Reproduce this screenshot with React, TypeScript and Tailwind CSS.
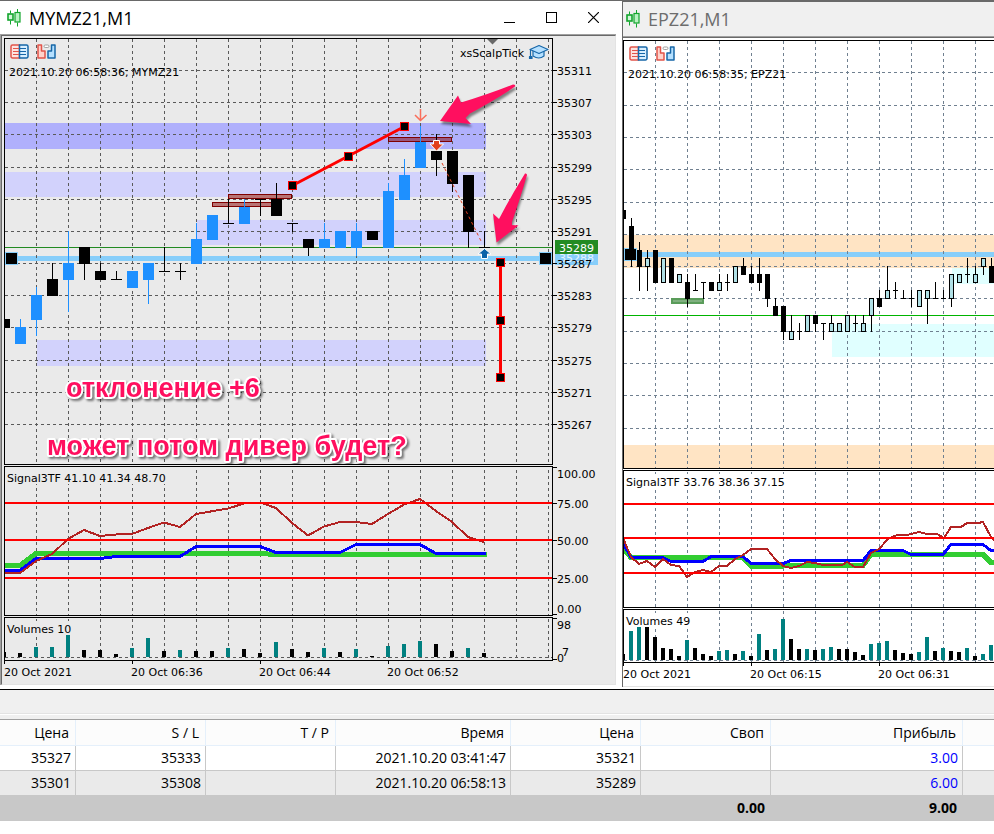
// src/App.tsx
import React from 'react';

type CandleKind = 'up' | 'down' | 'flat';
// x, high, low, body top, body bottom, kind
type CandleRow = [number, number, number, number, number, CandleKind];
// x, height, rising
type VolumeRow = [number, number, boolean];

const MYM_CANDLES: CandleRow[] = [
    [4, 319, 328, 319, 328, 'down'],
    [20, 319, 344, 327, 344, 'up'],
    [36, 287, 336, 295, 320, 'up'],
    [52, 263, 296, 279, 296, 'down'],
    [68, 231, 312, 263, 280, 'up'],
    [84, 247, 280, 247, 264, 'down'],
    [100, 263, 280, 271, 280, 'down'],
    [116, 271, 280, 279, 280, 'flat'],
    [132, 271, 288, 271, 288, 'up'],
    [148, 263, 304, 263, 280, 'up'],
    [164, 247, 272, 271, 272, 'flat'],
    [180, 263, 280, 271, 272, 'flat'],
    [196, 223, 264, 239, 264, 'up'],
    [212, 215, 240, 215, 240, 'up'],
    [228, 199, 224, 223, 224, 'flat'],
    [244, 199, 224, 207, 224, 'up'],
    [260, 199, 216, 199, 200, 'flat'],
    [276, 183, 216, 199, 216, 'down'],
    [292, 223, 232, 223, 224, 'flat'],
    [308, 239, 256, 239, 248, 'down'],
    [324, 223, 248, 239, 248, 'up'],
    [340, 231, 248, 231, 248, 'up'],
    [356, 223, 256, 231, 248, 'up'],
    [372, 231, 240, 231, 240, 'down'],
    [388, 183, 248, 191, 248, 'up'],
    [404, 159, 200, 175, 200, 'up'],
    [420, 126, 168, 142, 168, 'up'],
    [436, 134, 176, 151, 160, 'down'],
    [452, 151, 192, 151, 184, 'down'],
    [468, 175, 248, 175, 232, 'down'],
    [484, 231, 248, 247, 248, 'flat'],
];

const EP_CANDLES: CandleRow[] = [
    [623, 210, 219, 210, 219, 'down'],
    [631, 218, 267, 226, 260, 'down'],
    [639, 242, 291, 250, 267, 'down'],
    [647, 250, 291, 258, 267, 'up'],
    [655, 250, 283, 250, 283, 'down'],
    [663, 258, 283, 258, 283, 'up'],
    [671, 258, 283, 258, 283, 'down'],
    [679, 274, 283, 274, 283, 'up'],
    [687, 274, 307, 282, 299, 'down'],
    [695, 274, 291, 290, 291, 'flat'],
    [703, 282, 299, 282, 283, 'flat'],
    [711, 282, 291, 282, 291, 'down'],
    [719, 274, 291, 282, 291, 'up'],
    [727, 274, 291, 282, 283, 'flat'],
    [735, 266, 283, 266, 283, 'up'],
    [743, 258, 275, 266, 275, 'down'],
    [751, 266, 283, 274, 283, 'down'],
    [759, 258, 291, 274, 283, 'down'],
    [767, 274, 307, 274, 299, 'down'],
    [775, 298, 316, 306, 316, 'down'],
    [783, 306, 340, 306, 332, 'down'],
    [791, 315, 340, 331, 340, 'up'],
    [799, 323, 340, 331, 332, 'flat'],
    [807, 315, 332, 315, 332, 'up'],
    [815, 315, 332, 315, 324, 'down'],
    [823, 323, 340, 323, 324, 'flat'],
    [831, 315, 332, 323, 332, 'up'],
    [839, 323, 332, 323, 332, 'up'],
    [847, 315, 332, 315, 332, 'up'],
    [855, 315, 332, 323, 324, 'flat'],
    [863, 315, 332, 323, 332, 'up'],
    [871, 298, 332, 298, 316, 'up'],
    [879, 290, 307, 298, 307, 'down'],
    [887, 266, 299, 290, 299, 'up'],
    [895, 282, 299, 290, 291, 'flat'],
    [903, 290, 299, 298, 299, 'flat'],
    [911, 290, 307, 298, 299, 'flat'],
    [919, 290, 307, 290, 307, 'up'],
    [927, 290, 324, 290, 299, 'up'],
    [935, 282, 299, 298, 299, 'flat'],
    [943, 290, 299, 298, 299, 'flat'],
    [951, 274, 307, 274, 299, 'up'],
    [959, 274, 283, 274, 283, 'up'],
    [967, 258, 283, 274, 275, 'flat'],
    [975, 266, 283, 274, 283, 'up'],
    [983, 258, 275, 258, 267, 'up'],
    [991, 258, 283, 266, 283, 'down'],
];

const MYM_VOLUMES: VolumeRow[] = [
    [4, 5, false], [20, 4, false], [36, 10, true], [52, 10, true], [68, 22, true], [84, 7, false],
    [100, 7, false], [116, 3, false], [132, 9, true], [148, 19, true], [164, 6, false], [180, 7, true],
    [196, 6, false], [212, 6, false], [228, 9, true], [244, 8, false], [260, 4, false], [276, 15, true],
    [292, 8, false], [308, 5, false], [324, 9, true], [340, 5, false], [356, 8, true], [372, 1, false],
    [388, 11, true], [404, 13, true], [420, 16, true], [436, 13, false], [452, 6, false], [468, 9, true],
    [484, 4, false],
];

const EP_VOLUMES: VolumeRow[] = [
    [623, 6, false], [631, 29, true], [639, 33, true], [647, 33, false], [655, 23, false], [663, 12, false],
    [671, 11, false], [679, 4, false], [687, 20, true], [695, 12, false], [703, 6, false], [711, 4, false],
    [719, 9, true], [727, 10, true], [735, 6, false], [743, 9, true], [751, 4, false], [759, 26, true],
    [767, 10, false], [775, 11, true], [783, 41, true], [791, 21, false], [799, 11, false], [807, 11, true],
    [815, 10, false], [823, 11, true], [831, 13, true], [839, 11, false], [847, 11, false], [855, 8, false],
    [863, 5, false], [871, 16, true], [879, 17, true], [887, 19, true], [895, 10, false], [903, 7, false],
    [911, 6, false], [919, 8, true], [927, 23, true], [935, 9, false], [943, 12, true], [951, 9, false],
    [959, 8, false], [967, 12, true], [975, 4, false], [983, 6, true], [991, 15, true],
];

const MYM_ROWS = [70, 102, 134, 167, 199, 231, 263, 295, 327, 360, 392, 424];
const EP_ROWS = [72, 105, 137, 169, 202, 234, 266, 298, 331, 363, 395, 428];
const MYM_COLS = Array.from({ length: 17 }, (_, i) => 36 + i * 32);
const EP_COLS = Array.from({ length: 12 }, (_, i) => 655 + i * 32);

interface GridProps {
    rows: number[];
    cols: number[];
    left: number;
    top: number;
    bottom: number;
    color: string;
}

const Grid: React.FC<GridProps> = ({ rows, cols, left, top, bottom, color }) => (
    <g stroke={color} strokeDasharray="3 3" shapeRendering="crispEdges">
        {rows.map((y) => (
            <line key={`r${y}`} x1={left} x2={left + 2000} y1={y + 0.5} y2={y + 0.5} />
        ))}
        {cols.map((x) => (
            <line key={`c${x}`} x1={x + 0.5} x2={x + 0.5} y1={top} y2={bottom} />
        ))}
    </g>
);

interface CandlesProps {
    data: CandleRow[];
    half: number;
    upFill: string;
    upStroke: string;
}

const Candles: React.FC<CandlesProps> = ({ data, half, upFill, upStroke }) => (
    <g shapeRendering="crispEdges">
        {data.map(([x, high, low, top, bottom, kind]) => {
            const line = kind === 'up' ? upStroke : '#000';
            const w = half * 2 + 1;
            return (
                <g key={x}>
                    <rect x={x} y={high} width={1} height={low - high} fill={line} />
                    <rect x={x - half} y={top} width={w} height={bottom - top} fill={line} />
                    {kind === 'up' && (
                        <rect x={x - half + 1} y={top + 1} width={w - 2} height={bottom - top - 2} fill={upFill} />
                    )}
                </g>
            );
        })}
    </g>
);

const Volumes: React.FC<{ data: VolumeRow[]; base: number }> = ({ data, base }) => (
    <g shapeRendering="crispEdges">
        {data.map(([x, h, rising]) => (
            <rect key={x} x={x - 2} y={base - h} width={4} height={h} fill={rising ? '#008080' : '#000'} />
        ))}
    </g>
);

const Handle: React.FC<{ x: number; y: number }> = ({ x, y }) => (
    <g shapeRendering="crispEdges">
        <rect x={x - 4} y={y - 4} width={9} height={9} fill="#f00" />
        <rect x={x - 3} y={y - 3} width={7} height={7} fill="#000" />
    </g>
);

const LineHandle: React.FC<{ x: number; y: number }> = ({ x, y }) => (
    <g shapeRendering="crispEdges">
        <rect x={x - 1} y={y - 1} width={13} height={13} fill="#87cefa" />
        <rect x={x} y={y} width={11} height={11} fill="#000" />
    </g>
);

interface AxisLabel {
    y: number;
    text: string;
    tick?: number;
}

const AxisLabels: React.FC<{ labels: AxisLabel[] }> = ({ labels }) => (
    <g>
        {labels.map(({ y, text, tick }) => (
            <g key={text}>
                <rect x={553} y={tick ?? y} width={4} height={1} fill="#000" />
                <text x={557} y={y + 5}>
                    {text}
                </text>
            </g>
        ))}
    </g>
);

const CandleIcon: React.FC = () => (
    <svg className="block h-[18px] w-[14px]" viewBox="0 0 14 18" fill="none" stroke="#12a52c" aria-hidden="true">
        <path d="M3.5 1.5v3M3.5 11.5v4M10.5 0v3M10.5 13.5v4" />
        <rect x="1" y="5" width="5" height="6" fill="#d3f5d9" strokeWidth="1.6" />
        <rect x="8" y="3.5" width="5" height="9.5" fill="#b9f2c3" strokeWidth="1.2" />
    </svg>
);

const QuotesIcon: React.FC = () => (
    <svg className="block h-[15px] w-[19px]" viewBox="0 0 19 15" fill="none" aria-hidden="true">
        <path d="M9.5 1H2.5A1.5 1.5 0 0 0 1 2.500v10A1.5 1.5 0 0 0 2.500 14h7z" fill="#fde4e0" stroke="#e2544a" strokeWidth="1.500" />
        <path d="M9.5 1h7A1.5 1.5 0 0 1 18 2.500v10a1.5 1.5 0 0 1-1.500 1.500h-7z" fill="#d9efff" stroke="#1767a8" strokeWidth="1.500" />
        <path d="M3 4.500h6M3 7.500h6M3 10.500h6" stroke="#e2544a" />
        <path d="M10 4.500h6M10 7.500h6M10 10.500h6" stroke="#1767a8" />
    </svg>
);

const DepthIcon: React.FC = () => (
    <svg className="block h-[15px] w-[19px]" viewBox="0 0 19 15" aria-hidden="true">
        <path d="M1 1h3.500v6h3.500v7H1z" fill="#ffd2cb" stroke="#e2544a" strokeWidth="1.500" strokeLinejoin="round" />
        <path d="M18 1h-3.500v6H11v7h7z" fill="#b5e0ff" stroke="#1767a8" strokeWidth="1.500" strokeLinejoin="round" />
        <rect x="7" y="1" width="5" height="2.500" rx="1.200" fill="#fff" stroke="#a0a0a0" />
    </svg>
);

const ChartTools: React.FC = () => (
    <div className="absolute left-[5px] top-[5px] flex gap-2">
        <button type="button" aria-label="Quotes">
            <QuotesIcon />
        </button>
        <button type="button" aria-label="Depth of market">
            <DepthIcon />
        </button>
    </div>
);

const PRICE_LABELS: AxisLabel[] = MYM_ROWS.map((y, i) => ({ y, text: String(35311 - i * 4) }));

const MymWindow: React.FC = () => (
    <section className="flex min-w-0 flex-col bg-white">
        <header className="flex h-[34px] items-center border-t border-[#696969] pl-[7px] pr-[18px]">
            <CandleIcon />
            <h2 className="ml-2 flex-1 font-['Open_Sans','Noto_Sans',sans-serif] text-lg leading-6">MYMZ21,M1</h2>
            <div className="flex gap-5">
                <button type="button" aria-label="Minimize" className="flex h-6 w-[22px] items-center justify-center">
                    <svg className="h-[11px] w-[11px]" viewBox="0 0 11 11">
                        <path d="M0 10.500h11" stroke="#000" />
                    </svg>
                </button>
                <button type="button" aria-label="Maximize" className="flex h-6 w-[22px] items-center justify-center">
                    <svg className="h-[11px] w-[11px]" viewBox="0 0 11 11">
                        <rect x="0.5" y="0.5" width="10" height="10" fill="none" stroke="#000" />
                    </svg>
                </button>
                <button type="button" aria-label="Close" className="flex h-6 w-[22px] items-center justify-center">
                    <svg className="h-[11px] w-[11px]" viewBox="0 0 11 11">
                        <path d="M0 0l11 11M11 0L0 11" stroke="#000" strokeWidth="1.200" />
                    </svg>
                </button>
            </div>
        </header>
        <div className="mr-[6px] border-l border-t border-[#a0a0a0]">
            <div className="flex flex-col gap-px border border-b-[#e3e3e3] border-l-[#696969] border-r-[#e3e3e3] border-t-[#696969] bg-[#eaeaea] pl-[2px] pt-[2px] font-['DejaVu_Sans',sans-serif] text-[11px]">
                {/* Price */}
                <div className="flex">
                    <div className="relative h-[427px] min-w-0 flex-1 border border-black">
                        <svg className="block h-full w-full overflow-hidden">
                            <g transform="translate(-5 -39)">
                                <rect x="5" y="123" width="481" height="26" fill="#b0b0fc" />
                                <rect x="5" y="172" width="481" height="25" fill="#d2d2fc" />
                                <rect x="197" y="220" width="289" height="25" fill="#d2d2fc" />
                                <rect x="37" y="340" width="449" height="26" fill="#d2d2fc" />
                                <rect x="5" y="247" width="2000" height="1" fill="#228b22" />
                                <rect x="5" y="256" width="2000" height="5" fill="#87cefa" />
                                <Grid rows={MYM_ROWS} cols={MYM_COLS} left={5} top={39} bottom={464} color="#5a5a5a" />
                                <LineHandle x={6} y={253} />
                                <LineHandle x={540} y={253} />
                                <g fill="#b87474" stroke="#800000">
                                    <rect x="228.5" y="194.5" width="63" height="4" />
                                    <rect x="212.500" y="202.500" width="63" height="4" />
                                    <rect x="388.500" y="137.500" width="63" height="4" fill="#98587f" />
                                </g>
                                <Candles data={MYM_CANDLES} half={5} upFill="#1e90ff" upStroke="#1e90ff" />
                                <path d="M487 39h11l-5.500 5.500z" fill="#696969" />

                                {/* Trend lines */}
                                <g stroke="#f00" strokeWidth="3" fill="none">
                                    <path d="M292.500 185.500L404.500 126.500" />
                                    <path d="M500.500 262v116" />
                                </g>
                                <Handle x={292} y={185} />
                                <Handle x={348} y={156} />
                                <Handle x={404} y={126} />
                                <Handle x={500} y={262} />
                                <Handle x={500} y={320} />
                                <Handle x={500} y={377} />

                                {/* Deals */}
                                <path d="M442 163L482 243" stroke="#e2401d" strokeDasharray="3 3" fill="none" />
                                <path d="M420.500 109v11M415 115l5.500 5.500L426.500 115" stroke="#fa6e5a" strokeWidth="1.500" fill="none" />
                                <path d="M433.500 140.500h6v3.500h4L436.500 151 430 144h3.500z" fill="#e2401d" stroke="#fff" />
                                <path d="M481.500 258.500h6V254h3.500L484.500 248.500 478 254h3.500z" fill="#0b62a8" stroke="#fff" />

                                <text x="9" y="76">2021.10.20 06:58:36; MYMZ21</text>
                                <text x="524" y="57" textAnchor="end">xsScalpTick</text>
                                <g stroke="#1767a8" strokeLinejoin="round" strokeWidth="1.200">
                                    <path d="M533 50v6q6 4 11 0v-6" fill="#b5e0ff" />
                                    <path d="M530 49.500l9-4 9 4-9 4z" fill="#b5e0ff" />
                                    <path d="M530.500 50v6" fill="none" />
                                    <path d="M529.500 56.500h2.500v2h-2.500z" fill="#1767a8" />
                                </g>

                                {/* Notes */}
                                <g className="drop-shadow-[1px_3px_1px_rgba(0,0,0,0.45)]" fill="#ff0f5f">
                                    <path d="M440 121L458 95.500L461 102.500Q486 95 513 84.500Q516 84.500 515 86.500Q500 97 470 113.500L465.500 118L471 124z" />
                                    <path d="M496.500 242.500L493 213.500L499 219Q511 196 525 173.500Q527 173 527 175Q521 196 512 222L512 225L518.500 225.500z" />
                                </g>
                                <g
                                    className="font-['Liberation_Sans',sans-serif] text-[27px] font-bold drop-shadow-[2px_2px_1px_rgba(0,0,0,0.5)]"
                                    fill="#ff0f5f"
                                    stroke="#fff"
                                    strokeWidth="4"
                                    strokeLinejoin="round"
                                    paintOrder="stroke"
                                >
                                    <text x="66" y="397">отклонение +6</text>
                                    <text x="47" y="455">может потом дивер будет?</text>
                                </g>
                            </g>
                        </svg>
                        <ChartTools />
                    </div>
                    <svg className="block h-[427px] w-[62px] shrink-0">
                        <g transform="translate(-553 -38)">
                            <rect x="555" y="254" width="43" height="11" fill="#87cefa" />
                            <text x="559" y="262" fill="#e8f4ff">35288</text>
                            <rect x="555" y="240" width="43" height="14" fill="#228b22" />
                            <text x="559" y="252" fill="#fff">35289</text>
                            <AxisLabels labels={PRICE_LABELS} />
                        </g>
                    </svg>
                </div>

                {/* Signal3TF */}
                <div className="flex">
                    <div className="h-[150px] min-w-0 flex-1 border border-black">
                        <svg className="block h-full w-full overflow-hidden">
                            <g transform="translate(-5 -467)">
                                <Grid rows={[]} cols={MYM_COLS} left={5} top={470} bottom={615} color="#5a5a5a" />
                                <rect x="7" y="470" width="161" height="14" fill="#eaeaea" />
                                <text x="7" y="482">Signal3TF 41.10 41.34 48.70</text>
                                <g fill="none" shapeRendering="crispEdges">
                                    <path d="M4 565.500H20L36 553.500H260L276 554.500H487" stroke="#32cd32" strokeWidth="5" />
                                    <path
                                        d="M4 570.500H20L36 558.500H100L116 556.500H180L196 546.500H260L276 552.500H340L356 544.500H420L436 553.500H486"
                                        stroke="#00f"
                                        strokeWidth="3"
                                    />
                                    <path
                                        d="M4 573H20L36 561L52 554L68 539L84 530L100 536L116 534.500L132 534L148 528L164 522.500L180 527L196 514L228 508.500L244 503.500L260 502.500L276 508L292 523L308 535.500L324 526.500L340 522L356 522L372 524L388 514L404 504.500L420 499L436 511L452 522L468 537L484 542"
                                        stroke="#b22222"
                                        strokeWidth="2"
                                    />
                                    <path d="M5 503h2000M5 540h2000M5 578h2000" stroke="#f00" strokeWidth="2" />
                                </g>
                            </g>
                        </svg>
                    </div>
                    <svg className="block h-[150px] w-[62px] shrink-0">
                        <g transform="translate(-553 -466)">
                            <AxisLabels
                                labels={[
                                    { y: 473, text: '100.00', tick: 467 },
                                    { y: 503, text: '75.00' },
                                    { y: 540, text: '50.00' },
                                    { y: 578, text: '25.00' },
                                    { y: 608, text: '0.00', tick: 614 },
                                ]}
                            />
                        </g>
                    </svg>
                </div>

                {/* Volumes */}
                <div className="flex">
                    <div className="h-[44px] min-w-0 flex-1 border border-black">
                        <svg className="block h-full w-full overflow-hidden">
                            <g transform="translate(-5 -618)">
                                <Grid rows={[657]} cols={MYM_COLS} left={5} top={619} bottom={660} color="#5a5a5a" />
                                <rect x="7" y="621" width="64" height="14" fill="#eaeaea" />
                                <text x="7" y="633">Volumes 10</text>
                                <Volumes data={MYM_VOLUMES} base={657} />
                            </g>
                        </svg>
                    </div>
                    <svg className="block h-[44px] w-[62px] shrink-0 overflow-visible">
                        <g transform="translate(-553 -617)">
                            <AxisLabels
                                labels={[
                                    { y: 624, text: '98', tick: 618 },
                                    { y: 657, text: '0', tick: 659 },
                                ]}
                            />
                            <text x="562" y="656">7</text>
                        </g>
                    </svg>
                </div>
                <svg className="-mt-px block h-[23px] w-full">
                    <g transform="translate(-4 -661)">
                        <path d="M4.500 661v3M132.500 661v3M260.500 661v3M388.500 661v3" stroke="#000" />
                        <text x="4" y="676">20 Oct 2021</text>
                        <text x="131" y="676">20 Oct 06:36</text>
                        <text x="259" y="676">20 Oct 06:44</text>
                        <text x="387" y="676">20 Oct 06:52</text>
                    </g>
                </svg>
            </div>
        </div>
    </section>
);

const EpWindow: React.FC = () => (
    <section className="flex min-w-0 flex-col overflow-hidden border-l border-t-2 border-[#696969] bg-white">
        <header className="flex h-[34px] items-center bg-[#f0f0f0] pl-[3px]">
            <CandleIcon />
            <h2 className="ml-2 font-['Open_Sans','Noto_Sans',sans-serif] text-lg leading-6 text-[#6d6d6d]">EPZ21,M1</h2>
        </header>
        <div className="border-t border-[#a0a0a0]">
            <div className="flex flex-col gap-px border-b border-t border-b-[#e3e3e3] border-t-[#696969] pt-[2px] font-['DejaVu_Sans',sans-serif] text-[11px]">
                {/* Price */}
                <div className="relative h-[429px] border-y border-l border-black">
                    <svg className="block h-full w-full overflow-hidden">
                        <g transform="translate(-624 -41)">
                            <rect x="624" y="235" width="2000" height="33" fill="#ffe4c4" />
                            <rect x="624" y="445" width="2000" height="23" fill="#ffe4c4" />
                            <rect x="832" y="324" width="2000" height="33" fill="#e0ffff" />
                            <rect x="952" y="268" width="2000" height="16" fill="#e0ffff" />
                            <rect x="624" y="252" width="2000" height="5" fill="#87cefa" />
                            <rect x="624" y="315" width="2000" height="1" fill="#00b400" />
                            <Grid rows={EP_ROWS} cols={EP_COLS} left={624} top={41} bottom={468} color="#708090" />
                            <rect x="672" y="299" width="31" height="4" fill="#7fb07f" stroke="#5a9c5a" strokeWidth="2" />
                            <LineHandle x={625} y={249} />
                            <Candles data={EP_CANDLES} half={2} upFill="#b0e0e6" upStroke="#000" />
                            <text x="628" y="78">2021.10.20 06:58:35; EPZ21</text>
                        </g>
                    </svg>
                    <ChartTools />
                </div>

                {/* Signal3TF */}
                <div className="h-[138px] border-y border-l border-black">
                    <svg className="block h-full w-full overflow-hidden">
                        <g transform="translate(-624 -471)">
                            <Grid rows={[]} cols={EP_COLS} left={624} top={472} bottom={607} color="#708090" />
                            <rect x="626" y="474" width="161" height="14" fill="#fff" />
                            <text x="626" y="486">Signal3TF 33.76 38.36 37.15</text>
                            <g fill="none" shapeRendering="crispEdges">
                                <path
                                    d="M623 549L631 557.500H743L751 566H783L791 565.500H863L871 554.500H983L991 562.500H995"
                                    stroke="#32cd32"
                                    strokeWidth="5"
                                />
                                <path
                                    d="M623 543L631 557.500H663L671 561.500H703L711 556.500H743L751 563.500H783L791 560.500H863L871 550.500H903L911 554.500H943L951 544.500H983L991 550.500H995"
                                    stroke="#00f"
                                    strokeWidth="3"
                                />
                                <path
                                    d="M623 538L631 557L639 564L647 561L655 567L663 559L671 565L679 566L687 577L695 572L703 570L711 572L719 566L727 566L735 559L743 555L751 549H767L775 559L783 566L791 568L799 566L807 562L815 563L823 565H842L847 562L855 567H863L871 553L879 549L888 539L897 535L907 535L919 532L927 534H937L944 538L951 527H961L967 523H978L983 522L991 537L995 541"
                                    stroke="#b22222"
                                    strokeWidth="2"
                                />
                                <path d="M624 504h2000M624 538h2000M624 573h2000" stroke="#f00" strokeWidth="2" />
                            </g>
                        </g>
                    </svg>
                </div>

                {/* Volumes */}
                <div className="h-[54px] border-y border-l border-black">
                    <svg className="block h-full w-full overflow-hidden">
                        <g transform="translate(-624 -610)">
                            <Grid rows={[660]} cols={EP_COLS} left={624} top={611} bottom={662} color="#708090" />
                            <rect x="626" y="613" width="65" height="14" fill="#fff" />
                            <text x="626" y="625">Volumes 49</text>
                            <Volumes data={EP_VOLUMES} base={660} />
                        </g>
                    </svg>
                </div>
                <svg className="-mt-px block h-[23px] w-full">
                    <g transform="translate(-623 -663)">
                        <path d="M623.500 663v3M751.500 663v3M879.500 663v3" stroke="#000" />
                        <text x="623" y="678">20 Oct 2021</text>
                        <text x="750" y="678">20 Oct 06:15</text>
                        <text x="878" y="678">20 Oct 06:31</text>
                    </g>
                </svg>
            </div>
        </div>
    </section>
);

const HEADERS = ['Цена', 'S / L', 'T / P', 'Время', 'Цена', 'Своп', 'Прибыль'];
const ORDERS = [
    ['35327', '35333', '', '2021.10.20 03:41:47', '35321', '', '3.00'],
    ['35301', '35308', '', '2021.10.20 06:58:13', '35289', '', '6.00'],
];

const OrdersTable: React.FC = () => (
    <table className="w-full table-fixed border-separate border-spacing-0 border-t border-[#a0a0a0] text-right font-['Open_Sans','Noto_Sans',sans-serif] text-sm leading-6">
        <colgroup>
            <col className="w-[76px]" />
            <col className="w-[130px]" />
            <col className="w-[130px]" />
            <col className="w-[175px]" />
            <col className="w-[130px]" />
            <col className="w-[130px]" />
            <col className="w-[192px]" />
            <col />
        </colgroup>
        <thead>
            <tr className="h-[26px] bg-[#fcfcfc]">
                {HEADERS.map((title, i) => (
                    <th key={i} scope="col" className="border-b border-r border-[#e5f0fb] p-0 pr-[6px] font-normal">
                        {title}
                    </th>
                ))}
                <td className="border-b border-[#e5f0fb] p-0" />
            </tr>
        </thead>
        <tbody>
            {ORDERS.map((row, r) => (
                <tr key={r} className="group odd:bg-white even:bg-[#eaeaea]">
                    {row.map((value, i) => (
                        <td
                            key={i}
                            className={`h-6 border-r border-[#c8c8c8] p-0 pr-1 group-odd:border-b ${i === 6 ? 'text-[#00f]' : ''}`}
                        >
                            {value}
                        </td>
                    ))}
                    <td className="border-[#c8c8c8] p-0 group-odd:border-b" />
                </tr>
            ))}
        </tbody>
        <tfoot>
            <tr className="h-[26px] bg-[#c8c8c8] font-bold">
                <td colSpan={5} className="p-0" />
                <td className="p-0 pr-[6px]">0.00</td>
                <td className="p-0 pr-[6px]">9.00</td>
                <td className="p-0" />
            </tr>
        </tfoot>
    </table>
);

const App: React.FC = () => {
    return (
        <main className="min-h-screen bg-white text-black">
            <div className="grid grid-cols-[622fr_372fr] pb-[2px]">
                <MymWindow />
                <EpWindow />
            </div>
            <div className="border-t border-black bg-[#f0f0f0]">
                <div className="h-6 border-b border-[#e3e3e3]" />
                <div className="mb-1 h-px bg-white" />
                <OrdersTable />
            </div>
        </main>
    );
};

export default App;
